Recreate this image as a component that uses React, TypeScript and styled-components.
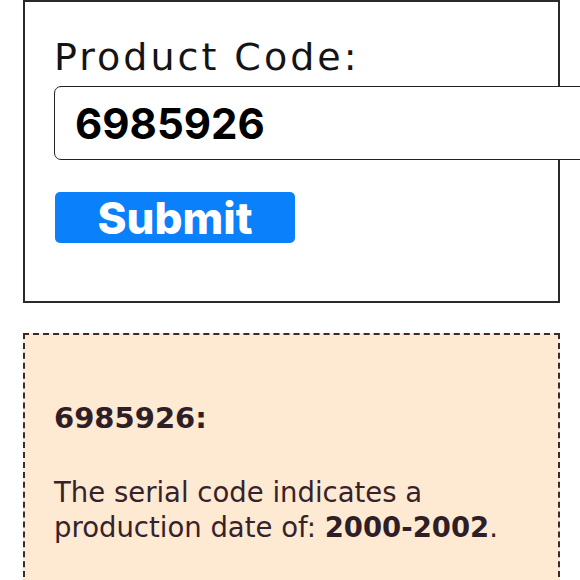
import React, { useState } from 'react';
import styled, { createGlobalStyle } from 'styled-components';

const GlobalStyle = createGlobalStyle`
  html, body {
    margin: 0;
    padding: 0;
    background: #ffffff;
    overflow: hidden;
  }
  body {
    font-family: "DejaVu Sans", "Noto Sans", sans-serif;
    color: #111;
  }
`;

const Page = styled.div`
  width: 537px;
  margin: 0 20px 0 23px;
`;

const FormCard = styled.form`
  border: 2px solid #2a2a2a;
  padding: 33px 29px 58px;
`;

const Label = styled.label`
  display: block;
  font-size: 38px;
  line-height: 44px;
  letter-spacing: 3px;
  font-weight: 400;
  color: #141414;
`;

const CodeInput = styled.input`
  display: block;
  box-sizing: border-box;
  width: 560px;
  height: 74px;
  margin-top: 7px;
  padding: 0 20px;
  border: 1.5px solid #222;
  border-radius: 7px;
  background: #fff;
  font-family: Inter, "Liberation Sans", sans-serif;
  font-size: 42px;
  font-weight: 700;
  color: #000;
  outline: none;
`;

const SubmitButton = styled.button`
  display: flex;
  align-items: center;
  justify-content: center;
  width: 240px;
  height: 51px;
  margin-top: 32px;
  margin-left: 1px;
  padding: 0;
  border: none;
  border-radius: 5px;
  background: #0b80fb;
  color: #fff;
  font-family: Inter, "Liberation Sans", sans-serif;
  font-size: 44px;
  font-weight: 800;
  cursor: pointer;
`;

const ResultCard = styled.section`
  margin-top: 30px;
  border: 2px dashed #3a2a2a;
  background: #fee9d2;
  padding: 66px 29px 40px;
  color: #35232c;
`;

const ResultTitle = styled.h2`
  margin: 0;
  font-size: 29px;
  line-height: 34px;
  font-weight: 700;
  color: #2e1e27;
`;

const ResultText = styled.p`
  margin: 40px 0 0;
  font-size: 27.5px;
  line-height: 35px;
  font-weight: 400;

  strong {
    font-weight: 700;
    color: #2e1e27;
  }
`;

export default function App() {
  const [code, setCode] = useState('6985926');

  return (
    <>
      <GlobalStyle />
      <Page>
        <FormCard onSubmit={(e) => e.preventDefault()}>
          <Label htmlFor="code">Product Code:</Label>
          <CodeInput id="code" value={code} onChange={(e) => setCode(e.target.value)} />
          <SubmitButton type="submit">Submit</SubmitButton>
        </FormCard>
        <ResultCard>
          <ResultTitle>6985926:</ResultTitle>
          <ResultText>
            The serial code indicates a production date of: <strong>2000-2002</strong>.
          </ResultText>
        </ResultCard>
      </Page>
    </>
  );
}
